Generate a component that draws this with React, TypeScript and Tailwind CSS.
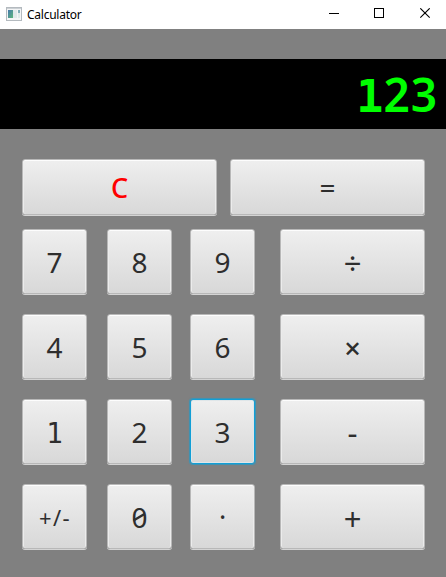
import type { ReactNode } from "react";

const SANS = "font-['Noto_Sans','Open_Sans',sans-serif]";
const MONO = "font-['DejaVu_Sans_Mono',monospace]";

function Key({ size, focused = false, children }: { size: string; focused?: boolean; children: ReactNode }) {
  const edge = focused
    ? "rounded-[3px] border border-[#129fd6] shadow-[0_0_1px_1px_rgba(18,159,214,0.65),inset_0_0_0_1px_#dfe6e9]"
    : "rounded-[3px] border border-[#b8b8b8] shadow-[0_1px_0_#d4d4d4,inset_0_1px_0_#fdfdfd,inset_1px_0_0_#ececec,inset_-1px_0_0_#ececec]";
  return (
    <button
      className={`${size} ${edge} flex shrink-0 items-center justify-center bg-linear-to-b from-[#efefef] to-[#d8d8d8] text-[28px] leading-none text-[#2e2e2e]`}
    >
      {children}
    </button>
  );
}

function SlashedZero() {
  return (
    <span className="relative">
      0
      <svg className="absolute left-0 top-0 h-full w-full" viewBox="0 0 16 28" stroke="currentColor" strokeWidth="2.4">
        <path d="M2.5 17.5 13.5 11" />
      </svg>
    </span>
  );
}

function One() {
  return <span className={`${MONO} pt-[5px] text-[27.5px]`}>1</span>;
}

const SQUARE = "w-[65px] h-[65px]";
const WIDE = "w-[145px] h-[65px]";
const HALF = "w-[195px] h-[56px]";

const OP = "block pt-[3px] text-[31px]";

function Row({ left, middle, right, operator, focusRight = false }: {
  left: ReactNode; middle: ReactNode; right: ReactNode; operator: ReactNode; focusRight?: boolean;
}) {
  return (
    <div className="flex h-[66px]">
      <Key size={SQUARE}>{left}</Key>
      <div className="w-5 shrink-0" />
      <Key size={SQUARE}>{middle}</Key>
      <div className="w-[18px] shrink-0" />
      <Key size={SQUARE} focused={focusRight}>{right}</Key>
      <div className="w-[25px] shrink-0" />
      <Key size={WIDE}>{operator}</Key>
    </div>
  );
}

export default function App() {
  return (
    <div className={`flex h-[577px] w-[446px] flex-col overflow-hidden bg-[#808080] ${SANS}`}>
      <header className="flex h-[29px] shrink-0 items-center bg-white pl-[6px] text-black">
        <svg className="mb-px" width="16" height="14" viewBox="0 0 16 14" shapeRendering="crispEdges">
          <defs>
            <linearGradient id="pane" x1="0" y1="0" x2="1" y2="1">
              <stop offset="0" stopColor="#4779ad" />
              <stop offset="1" stopColor="#5cb77b" />
            </linearGradient>
          </defs>
          <rect x=".5" y=".5" width="15" height="12.5" fill="#f4f5f6" stroke="#b4babf" />
          <path d="M1 1.5H15" stroke="#cbd0d4" />
          <rect x="2" y="3" width="5" height="8" fill="url(#pane)" />
          <rect x="7" y="3" width="4" height="8" fill="#e0e9ea" />
          <rect x="12" y="3" width="2" height="3" fill="#80adb8" />
          <rect x="12" y="6" width="2" height="5" fill="#dfeae9" />
        </svg>
        <span className="ml-[5px] text-[12px] leading-none tracking-[-0.25px]">Calculator</span>
        <svg className="ml-auto mr-[15px] shrink-0" width="102" height="13" viewBox="0 0 102 13" fill="none" stroke="#000">
          <path d="M0 5.5H10M45.5 .5h9v9h-9z" shapeRendering="crispEdges" />
          <path d="M91.3 .3l9.4 9.4M100.7 .3l-9.4 9.4" strokeWidth="1.1" />
        </svg>
      </header>
      <div className="mt-[30px] flex h-[70px] shrink-0 items-center justify-end bg-black pb-px pr-[8px] text-[46px] font-semibold leading-none text-[#00ff00]">
        <span className={`${MONO} pt-[5px] text-[45px] font-bold`}>1</span>
        <span className="tracking-[1px]">23</span>
      </div>
      <main className="ml-[22px] mt-[30px] flex w-[403px] flex-col">
        <div className="flex h-[57px] justify-between">
          <Key size={HALF}><span className="text-[27px] font-medium text-[#ff0000]">C</span></Key>
          <Key size={HALF}><span className="text-[28px]">=</span></Key>
        </div>
        <div className="mt-[13px] flex flex-col gap-[19px]">
          <Row left="7" middle="8" right="9" operator={<span className={OP}>÷</span>} />
          <Row left="4" middle="5" right="6" operator={<span className="block pt-px text-[29px] font-medium">×</span>} />
          <Row left={<One />} middle="2" right="3" focusRight operator={<span className="block pt-px text-[31px]">-</span>} />
          <Row
            left={<span className="pl-px pt-px text-[22px] tracking-[1.3px]">+/-</span>}
            middle={<SlashedZero />}
            right={<span className="text-[27px]">·</span>}
            operator={<span className={OP}>+</span>}
          />
        </div>
      </main>
    </div>
  );
}
